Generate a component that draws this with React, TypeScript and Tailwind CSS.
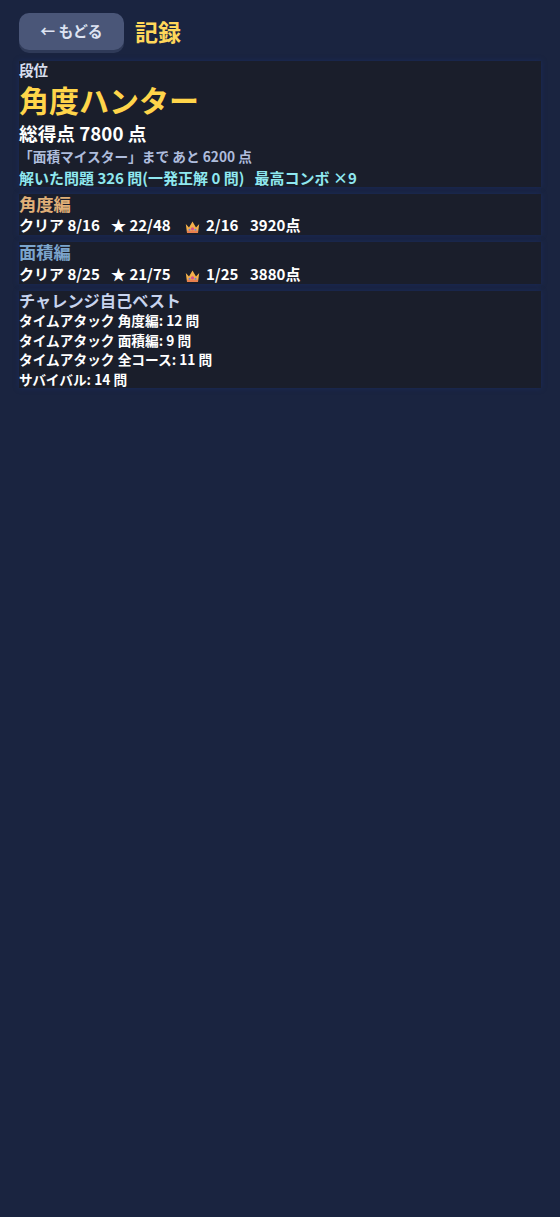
// Records screen: rank panel, per-course stats and challenge bests.

const FONT = "font-['Noto_Sans_CJK_JP','Noto_Sans',sans-serif]";
const PANEL = "bg-[#1a1e2b] shadow-[0_0_5px_#1a2b5c]";

function Crown() {
  return (
    <svg width="15" height="14" viewBox="0 0 15 14" className="mt-[3px] block">
      <path d="M0.8 4 L4 7.5 L7.5 1.5 L11 7.5 L14.2 4 L13 13 L2 13 Z" fill="#f4b04a" />
      <rect x="2" y="10.6" width="11" height="2.4" fill="#e8804e" />
      <circle cx="7.5" cy="8.8" r="1.6" fill="#d8508a" />
      <circle cx="4.5" cy="9.8" r="1" fill="#7080d8" />
      <circle cx="10.5" cy="9.8" r="1" fill="#7080d8" />
    </svg>
  );
}

function StatRow({ clear, stars, crowns, points }: { clear: string; stars: string; crowns: string; points: string }) {
  return (
    <div className="flex h-[20px] items-center text-[15px] leading-[20px] font-bold text-white">
      <span className="w-[92px]">クリア {clear}</span>
      <span className="w-[74px]">★ {stars}</span>
      <span className="flex w-[65px] items-center">
        <Crown />
        <span className="ml-[6px]">{crowns}</span>
      </span>
      <span>{points}点</span>
    </div>
  );
}

export default function App() {
  return (
    <div className={`${FONT} min-h-[1217px] bg-[#1a2440] px-[19px] pt-[13px]`}>
      <div className="flex h-[37px] items-center">
        <button
          type="button"
          className="h-[37px] w-[105px] rounded-[10px] bg-[#4a5678] text-[14.8px] font-bold text-[#dde3f2] shadow-[0_3px_0_#2f3a58]"
        >
          ← もどる
        </button>
        <h1 className="ml-[11px] text-[23px] font-bold text-[#ffd75a]">記録</h1>
      </div>

      <section className={`mt-[11px] h-[126px] ${PANEL}`}>
        <div className="text-[14.5px] leading-[18px] font-bold text-[#d8deee]">段位</div>
        <div className="text-[30px] leading-[41px] font-bold text-[#ffd54a]">角度ハンター</div>
        <div className="text-[18.7px] leading-[25px] font-bold text-white">総得点 7800 点</div>
        <div className="text-[13.7px] leading-[22px] font-bold text-[#aebcdc]">「面積マイスター」まで あと 6200 点</div>
        <div className="text-[15px] leading-[21px] font-bold text-[#8fe8f0]">
          解いた問題 326 問(一発正解 0 問)&nbsp;&nbsp; 最高コンボ ×9
        </div>
      </section>

      <section className={`mt-[7px] h-[41px] ${PANEL}`}>
        <div className="mb-[1px] text-[17.3px] leading-[20px] font-bold text-[#e0b078]">角度編</div>
        <StatRow clear="8/16" stars="22/48" crowns="2/16" points="3920" />
      </section>

      <section className={`mt-[7px] h-[42px] ${PANEL}`}>
        <div className="mb-[2px] text-[17.3px] leading-[20px] font-bold text-[#7ba4cc]">面積編</div>
        <StatRow clear="8/25" stars="21/75" crowns="1/25" points="3880" />
      </section>

      <section className={`mt-[7px] h-[97px] ${PANEL}`}>
        <div className="mb-[2px] text-[16.2px] leading-[18px] font-bold text-[#c8d4ee]">チャレンジ自己ベスト</div>
        <div className="text-[13.7px] leading-[19.5px] font-bold text-white">
          <div>タイムアタック 角度編: 12 問</div>
          <div>タイムアタック 面積編: 9 問</div>
          <div>タイムアタック 全コース: 11 問</div>
          <div>サバイバル: 14 問</div>
        </div>
      </section>
    </div>
  );
}
